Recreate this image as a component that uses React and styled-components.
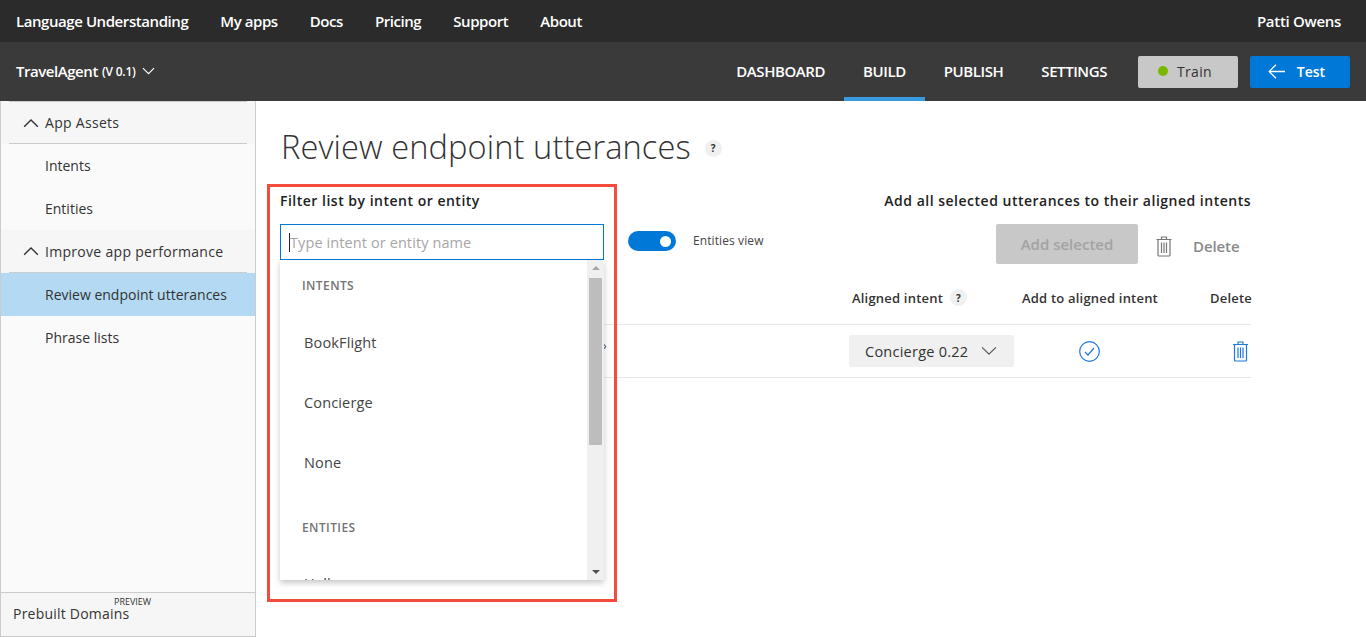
import React from "react";
import styled, { createGlobalStyle } from "styled-components";

const GlobalStyle = createGlobalStyle`
  html, body, #root { margin: 0; height: 100%; }
  body {
    font-family: "Open Sans", "Noto Sans", "Liberation Sans", sans-serif;
    background: #fff;
    overflow: hidden;
  }
  * { box-sizing: border-box; }
`;

const Page = styled('div')`
  width: 1366px;
  height: 637px;
  display: flex;
  flex-direction: column;
  position: relative;
`;

const TopBar = styled('div')`
  height: 42px;
  flex-shrink: 0;
  background: #2b2b2b;
  color: #fff;
  display: flex;
  align-items: center;
  padding: 0 25px 0 16px;
  font-size: 15px;
  font-weight: 600;
  letter-spacing: -0.43px;
`;

const TopLink = styled('span')`
  margin-right: ${props => props.gap}px;
`;

const UserName = styled('span')`
  margin-left: auto;
  font-size: 15px;
  letter-spacing: -0.3px;
`;

const AppBar = styled('div')`
  height: 59px;
  flex-shrink: 0;
  background: #3a3a3a;
  color: #fff;
  display: flex;
  align-items: center;
  padding: 0 16px;
`;

const AppName = styled('span')`
  font-size: 15px;
  font-weight: 600;
  letter-spacing: -0.45px;
  display: flex;
  align-items: center;
  padding-bottom: 1px;
`;

const AppVersion = styled('span')`
  font-size: 12px;
  margin-left: 4px;
  margin-right: 6px;
  letter-spacing: -0.2px;
  padding-top: 1px;
`;

const Tabs = styled('div')`
  margin-left: auto;
  display: flex;
  align-self: stretch;
`;

const Tab = styled('div')`
  height: 100%;
  display: flex;
  align-items: center;
  padding: 2px 19px 0;
  font-size: 15px;
  font-weight: 600;
  letter-spacing: -0.42px;
  border-bottom: 4px solid ${props => (props.active ? '#3a9ae0' : 'transparent')};
`;

const TrainButton = styled('div')`
  width: 100px;
  height: 32px;
  margin-left: 12px;
  background: #c8c8c8;
  border-radius: 2px;
  color: #333;
  font-size: 14px;
  display: flex;
  align-items: center;
  justify-content: center;
  gap: 9px;
  letter-spacing: 0.3px;
  padding: 0 6px 1px 0;
`;

const StatusDot = styled('span')`
  width: 10px;
  height: 10px;
  border-radius: 50%;
  background: #7ab800;
`;

const TestButton = styled('div')`
  width: 100px;
  height: 32px;
  margin-left: 12px;
  background: #0078d7;
  border-radius: 2px;
  color: #fff;
  font-size: 14px;
  font-weight: 600;
  display: flex;
  align-items: center;
  justify-content: center;
  gap: 12px;
  padding: 0 7px 1px 0;
`;

const Body = styled('div')`
  flex: 1;
  display: flex;
  min-height: 0;
`;

const Sidebar = styled('nav')`
  width: 256px;
  flex-shrink: 0;
  background: #fafafa;
  border-left: 1px solid #ccc;
  border-right: 1px solid #ccc;
  border-bottom: 1px solid #ccc;
  display: flex;
  flex-direction: column;
  color: #333;
`;

const SectionHead = styled('div')`
  height: 43px;
  margin: 0 8px;
  padding: 0 0 0 14px;
  background: #f6f6f6;
  border-top: ${props => (props.first ? '1px solid #ccc' : 'none')};
  border-bottom: 1px solid #ccc;
  display: flex;
  align-items: center;
  gap: 6px;
  font-size: 14px;
  letter-spacing: 0.3px;
  box-shadow: -8px 0 0 #f6f6f6, 8px 0 0 #f6f6f6;
`;

const NavItem = styled('div')`
  height: 43px;
  padding: 0 0 0 44px;
  display: flex;
  align-items: center;
  font-size: 14px;
  background: ${props => (props.active ? '#b3daf2' : 'transparent')};
`;

const SideFooter = styled('div')`
  margin-top: auto;
  height: 44px;
  background: #f6f6f6;
  border-top: 1px solid #ccc;
  padding: 4px 0 0 12px;
  font-size: 14px;
  letter-spacing: 0.22px;
  display: flex;
  flex-direction: column;
`;

const PreviewTag = styled('span')`
  align-self: flex-start;
  margin: 0 0 -2px 101px;
  font-size: 9px;
  line-height: 9px;
  letter-spacing: 0;
`;

const Content = styled('main')`
  flex: 1;
  padding: 23px 115px 0 25px;
  color: #333;
  min-width: 0;
`;

const TitleRow = styled('div')`
  display: flex;
  align-items: center;
  gap: 14px;
  height: 44px;
`;

const Title = styled('h1')`
  margin: 0;
  font-size: 32.6px;
  font-weight: 300;
  letter-spacing: 0.1px;
  color: #333;
`;

const Help = styled('span')`
  width: ${props => props.size}px;
  height: ${props => props.size}px;
  border-radius: 50%;
  background: #f0f0f0;
  font-size: 10px;
  font-weight: 700;
  color: #333;
  display: inline-flex;
  align-items: center;
  justify-content: center;
  letter-spacing: 0;
`;

const TitleHelp = styled(Help)`
  margin-top: 4px;
`;

const LabelRow = styled('div')`
  margin-top: 20px;
  margin-left: -1px;
  height: 24px;
  display: flex;
  align-items: center;
  justify-content: space-between;
  font-size: 14px;
  font-weight: 600;
  letter-spacing: 0.5px;
  color: #222;
`;

const ControlRow = styled('div')`
  margin-top: 12px;
  margin-left: -1px;
  height: 40px;
  display: flex;
  align-items: flex-start;
`;

const SearchSpace = styled('div')`
  width: 324px;
  flex-shrink: 0;
`;

const Toggle = styled('span')`
  width: 48px;
  height: 20px;
  margin: 7px 0 0 24px;
  border-radius: 10px;
  background: #0078d7;
  display: flex;
  align-items: center;
  justify-content: flex-end;
  padding-right: 5px;
`;

const Knob = styled('span')`
  width: 11px;
  height: 11px;
  border-radius: 50%;
  background: #fff;
`;

const ToggleLabel = styled('span')`
  margin: 8px 0 0 17px;
  font-size: 12px;
  color: #444;
  letter-spacing: 0.1px;
`;

const AddSelected = styled('div')`
  margin-left: auto;
  width: 142px;
  height: 40px;
  background: #c8c8c8;
  border-radius: 2px;
  color: #a3a3a3;
  font-size: 15px;
  font-weight: 600;
  display: flex;
  align-items: center;
  justify-content: center;
`;

const DeleteAll = styled('div')`
  width: 113px;
  height: 44px;
  display: flex;
  align-items: center;
  gap: 21px;
  padding-left: 18px;
  color: #8a8a8a;
  font-size: 15px;
  font-weight: 600;
  letter-spacing: -0.1px;
`;

const Row = styled('div')`
  display: grid;
  grid-template-columns: 568px 173px 188px 1fr;
  align-items: center;
  border-bottom: 1px solid #e6e6e6;
  height: ${props => props.h}px;
  padding-bottom: ${props => props.low || 0}px;
`;

const Head = styled('div')`
  font-size: 13px;
  font-weight: 600;
  color: #333;
  display: flex;
  align-items: center;
  gap: 7px;
  letter-spacing: 0.2px;
  padding-left: ${props => props.pad || 0}px;
`;

const TableWrap = styled('div')`
  margin-top: 13px;
`;

const CutText = styled('span')`
  padding-left: 322px;
  font-size: 12px;
  line-height: 12px;
  padding-bottom: 11px;
  color: #444;
`;

const Select = styled('div')`
  width: 165px;
  height: 32px;
  background: #f0f0f0;
  border-radius: 2px;
  display: flex;
  align-items: center;
  padding-left: 16px;
  gap: 13px;
  font-size: 14.5px;
  color: #333;
  letter-spacing: 0.25px;
`;

const IconCell = styled('div')`
  display: flex;
  justify-content: ${props => props.end ? 'flex-end' : 'flex-start'};
  padding-left: ${props => props.pad || 0}px;
  padding-right: ${props => props.right || 0}px;
`;

const Dropdown = styled('div')`
  position: absolute;
  left: 280px;
  top: 224px;
  width: 324px;
`;

const SearchBox = styled('div')`
  height: 36px;
  border: 1px solid #0078d7;
  padding-left: 8px;
  display: flex;
  align-items: center;
  font-size: 14.5px;
  color: #a6a6a6;
  letter-spacing: 0.1px;
`;

const Caret = styled('span')`
  width: 1px;
  height: 19px;
  background: #222;
`;

const Menu = styled('div')`
  height: 320px;
  background: #fff;
  display: flex;
  box-shadow: 0 3px 6px rgba(0, 0, 0, 0.22);
  overflow: hidden;
`;

const MenuList = styled('div')`
  flex: 1;
  padding-top: 17px;
`;

const GroupHead = styled('div')`
  height: 21px;
  padding-left: 22px;
  font-size: 12px;
  font-weight: 600;
  color: #737373;
  margin-top: ${props => props.before || 0}px;
  margin-bottom: ${props => props.after}px;
  letter-spacing: 0.4px;
`;

const MenuItem = styled('div')`
  height: 60px;
  padding-left: 24px;
  font-size: 14.5px;
  color: #444;
  letter-spacing: 0.15px;
  line-height: 20px;
`;

const ScrollTrack = styled('div')`
  width: 17px;
  background: #f0f0f0;
  display: flex;
  flex-direction: column;
  align-items: center;
`;

const ScrollThumb = styled('div')`
  width: 13px;
  height: 167px;
  background: #bdbdbd;
  margin-top: 8px;
`;

const Arrow = styled('div')`
  width: 0;
  height: 0;
  border-left: 4px solid transparent;
  border-right: 4px solid transparent;
  margin-top: ${props => props.top || 0}px;
  ${props => (props.down ? 'border-top: 4px solid #505050; margin-top: auto; margin-bottom: 6px;' : 'border-bottom: 4px solid #a6a6a6;')}
`;

const Annotation = styled('div')`
  position: absolute;
  left: 267px;
  top: 184px;
  width: 350px;
  height: 418px;
  border: 3px solid #f44b3c;
  pointer-events: none;
`;

const Chevron = ({ up, size = 14, color = "currentColor", width = 1.2 }) => (
  <svg width={size} height={size * 0.6} viewBox="0 0 14 8" fill="none">
    <path d={up ? "M1 7.5 7 1.5l6 6" : "M1 1l6 6 6-6"} stroke={color} strokeWidth={width} />
  </svg>
);

const TrashIcon = ({ color, w = 16, h = 21 }) => (
  <svg width={w} height={h} viewBox="0 0 16 21" fill="none" stroke={color} strokeWidth="1.2">
    <path d="M.5 3.5h15M5.5 3.5V1h5v2.5" />
    <rect x="2" y="3.5" width="12" height="16.5" rx="1" />
    <path d="M5.5 6.5v10.5M8 6.5v10.5M10.5 6.5v10.5" />
  </svg>
);

const CheckIcon = () => (
  <svg width="21" height="21" viewBox="0 0 21 21" fill="none" stroke="#1f78e0" strokeWidth="1.2">
    <circle cx="10.5" cy="10.5" r="9.8" />
    <path d="M6 11l3 3 6-7" />
  </svg>
);

const BackArrow = () => (
  <svg width="17" height="15" viewBox="0 0 17 15" fill="none" stroke="#fff" strokeWidth="1.3">
    <path d="M17 7.5H1M8 .8 1.2 7.5 8 14.2" />
  </svg>
);

export default function App() {
  return (
    <Page>
      <GlobalStyle />
      <TopBar>
        <TopLink gap={32}>Language Understanding</TopLink>
        <TopLink gap={32}>My apps</TopLink>
        <TopLink gap={32}>Docs</TopLink>
        <TopLink gap={32}>Pricing</TopLink>
        <TopLink gap={32}>Support</TopLink>
        <TopLink gap={0}>About</TopLink>
        <UserName>Patti Owens</UserName>
      </TopBar>
      <AppBar>
        <AppName>
          TravelAgent
          <AppVersion>(V 0.1)</AppVersion>
          <Chevron size={13} />
        </AppName>
        <Tabs>
          <Tab>DASHBOARD</Tab>
          <Tab active>BUILD</Tab>
          <Tab>PUBLISH</Tab>
          <Tab>SETTINGS</Tab>
        </Tabs>
        <TrainButton><StatusDot />Train</TrainButton>
        <TestButton><BackArrow />Test</TestButton>
      </AppBar>
      <Body>
        <Sidebar>
          <SectionHead first><Chevron up size={16} />App Assets</SectionHead>
          <NavItem>Intents</NavItem>
          <NavItem>Entities</NavItem>
          <SectionHead><Chevron up size={16} />Improve app performance</SectionHead>
          <NavItem active>Review endpoint utterances</NavItem>
          <NavItem>Phrase lists</NavItem>
          <SideFooter>
            <PreviewTag>PREVIEW</PreviewTag>
            Prebuilt Domains
          </SideFooter>
        </Sidebar>
        <Content>
          <TitleRow>
            <Title>Review endpoint utterances</Title>
            <TitleHelp size={17}>?</TitleHelp>
          </TitleRow>
          <LabelRow>
            <span>Filter list by intent or entity</span>
            <span>Add all selected utterances to their aligned intents</span>
          </LabelRow>
          <ControlRow>
            <SearchSpace />
            <Toggle><Knob /></Toggle>
            <ToggleLabel>Entities view</ToggleLabel>
            <AddSelected>Add selected</AddSelected>
            <DeleteAll><TrashIcon color="#777" />Delete</DeleteAll>
          </ControlRow>
          <TableWrap>
            <Row h={48} low={6}>
              <span />
              <Head pad={3}>Aligned intent<Help size={17}>?</Help></Head>
              <Head>Add to aligned intent</Head>
              <Head>Delete</Head>
            </Row>
            <Row h={53}>
              <CutText>›</CutText>
              <Select>Concierge 0.22<Chevron size={16} color="#555" width={1} /></Select>
              <IconCell pad={57}><CheckIcon /></IconCell>
              <IconCell end right={2}><TrashIcon color="#1f78e0" w={17} /></IconCell>
            </Row>
          </TableWrap>
        </Content>
      </Body>
      <Dropdown>
        <SearchBox><Caret />Type intent or entity name</SearchBox>
        <Menu>
          <MenuList>
            <GroupHead after={35}>INTENTS</GroupHead>
            <MenuItem>BookFlight</MenuItem>
            <MenuItem>Concierge</MenuItem>
            <MenuItem>None</MenuItem>
            <GroupHead before={6} after={34}>ENTITIES</GroupHead>
            <MenuItem>Hello</MenuItem>
          </MenuList>
          <ScrollTrack>
            <Arrow top={6} />
            <ScrollThumb />
            <Arrow down />
          </ScrollTrack>
        </Menu>
      </Dropdown>
      <Annotation />
    </Page>
  );
}
